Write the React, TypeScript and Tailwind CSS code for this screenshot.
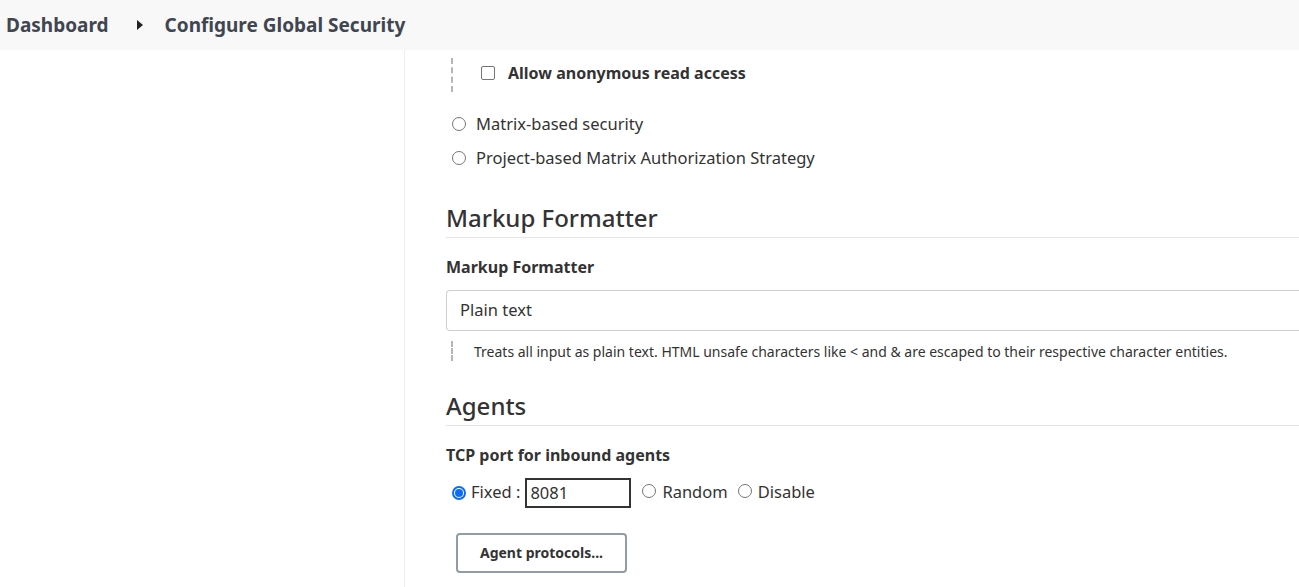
import React from "react";

function Radio({ checked = false }: { checked?: boolean }) {
  return checked ? (
    <span className="inline-flex h-[14px] w-[14px] shrink-0 items-center justify-center rounded-full border-2 border-[#0a6cff] bg-white">
      <span className="h-[8px] w-[8px] rounded-full bg-[#0a6cff]" />
    </span>
  ) : (
    <span className="inline-block h-[14px] w-[14px] shrink-0 rounded-full border border-[#767676] bg-white" />
  );
}

export default function App() {
  return (
    <div className="h-[587px] w-[1299px] overflow-hidden bg-white text-[#333]" style={{ fontFamily: '"Noto Sans", "Open Sans", sans-serif' }}>
      <div className="flex h-[50px] items-center bg-[#f8f8f8] pl-[6px] text-[19px] font-bold text-[#3f4650]">
        <span>Dashboard</span>
        <svg className="ml-[28px] mr-[22px]" width="6" height="10" viewBox="0 0 6 10">
          <path d="M0 0 L6 5 L0 10 Z" fill="#222" />
        </svg>
        <span>Configure Global Security</span>
      </div>
      <div className="flex h-[537px]">
        <div className="w-[405px] shrink-0 border-r border-[#eeeeee]" />
        <div className="min-w-0 flex-1 pl-[41px]">
          <div className="flex h-[44px] items-start pt-[8px]">
            <div className="ml-[5px] h-[34px] w-0 border-l-2 border-dashed border-[#b5b5b5]" />
            <div className="ml-[28px] mt-[6px] flex items-center">
              <span className="inline-block h-[14px] w-[14px] rounded-[2px] border border-[#767676] bg-white" />
              <span className="ml-[13px] text-[16px] font-bold leading-[18px]">Allow anonymous read access</span>
            </div>
          </div>
          <div className="mt-[18px] flex items-center pl-[6px] text-[16.5px]">
            <Radio />
            <span className="ml-[10px]">Matrix-based security</span>
          </div>
          <div className="mt-[9px] flex items-center pl-[6px] text-[16.5px]">
            <Radio />
            <span className="ml-[10px]">Project-based Matrix Authorization Strategy</span>
          </div>
          <div className="mt-[31px] border-b border-[#e5e5e5] pb-[3px] text-[24px] font-medium leading-[32px] text-[#333]">
            Markup Formatter
          </div>
          <div className="mt-[17px] text-[16px] font-bold leading-[24px]">Markup Formatter</div>
          <div className="mt-[11px] flex h-[41px] items-center rounded-l-[4px] border border-r-0 border-[#cfcfcf] pl-[13px] text-[16.5px]">
            Plain text
          </div>
          <div className="mt-[10px] flex items-center">
            <div className="ml-[5px] h-[20px] w-0 border-l-2 border-dashed border-[#b5b5b5]" />
            <span className="ml-[21px] text-[14px]">
              Treats all input as plain text. HTML unsafe characters like &lt; and &amp; are escaped to their respective character entities.
            </span>
          </div>
          <div className="mt-[28px] border-b border-[#e5e5e5] pb-[3px] text-[24px] font-medium leading-[32px]">Agents</div>
          <div className="mt-[17px] text-[16px] font-bold leading-[24px]">TCP port for inbound agents</div>
          <div className="mt-[11px] flex items-center pl-[6px] text-[16.5px]">
            <Radio checked />
            <span className="ml-[5px]">Fixed :</span>
            <input
              readOnly
              value="8081"
              className="ml-[5px] h-[30px] w-[106px] border-2 border-[#333] px-[3px] text-[16.5px] outline-none"
            />
            <span className="ml-[11px]"><Radio /></span>
            <span className="ml-[6px]">Random</span>
            <span className="ml-[10px]"><Radio /></span>
            <span className="ml-[6px]">Disable</span>
          </div>
          <button className="ml-[10px] mt-[25px] h-[40px] w-[171px] rounded-[4px] border-2 border-[#929ca4] bg-white text-[14px] font-bold text-[#333]">
            Agent protocols...
          </button>
        </div>
      </div>
    </div>
  );
}
